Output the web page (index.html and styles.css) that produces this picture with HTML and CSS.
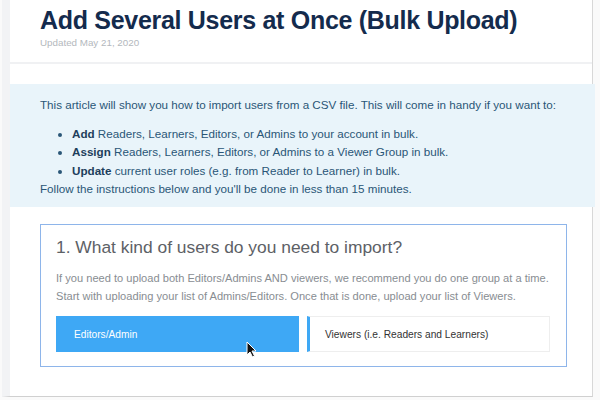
FILE: index.html
```html
<!DOCTYPE html>
<html>
<head>
<meta charset="utf-8">
<link rel="stylesheet" href="styles.css">
</head>
<body>
<div class="frame">
  <div class="page">
    <header class="head">
      <h1 class="title">Add Several Users at Once (Bulk Upload)</h1>
      <div class="updated">Updated May 21, 2020</div>
    </header>
    <section class="info">
      <p class="intro">This article will show you how to import users from a CSV file. This will come in handy if you want to:</p>
      <ul class="list">
        <li><b>Add</b> Readers, Learners, Editors, or Admins to your account in bulk.</li>
        <li><b>Assign</b> Readers, Learners, Editors, or Admins to a Viewer Group in bulk.</li>
        <li><b>Update</b> current user roles (e.g. from Reader to Learner) in bulk.</li>
      </ul>
      <p class="follow">Follow the instructions below and you'll be done in less than 15 minutes.</p>
    </section>
    <section class="step">
      <h2 class="step-title">1. What kind of users do you need to import?</h2>
      <p class="step-text">If you need to upload both Editors/Admins AND viewers, we recommend you do one group at a time. Start with uploading your list of Admins/Editors. Once that is done, upload your list of Viewers.</p>
      <div class="choices">
        <div class="choice active">Editors/Admin
          <svg class="cursor" width="12" height="17" viewBox="0 0 12 17"><path d="M1 1 L1 14 L4 11 L6.5 16 L8.5 15 L6 10 L10 10 Z" fill="#111" stroke="#fff" stroke-width="1"/></svg>
        </div>
        <div class="choice">Viewers (i.e. Readers and Learners)</div>
      </div>
    </section>
  </div>
</div>
</body>
</html>
```
FILE: styles.css
```css
* { box-sizing: border-box; }
html, body { margin: 0; padding: 0; }
body {
  width: 600px;
  height: 400px;
  overflow: hidden;
  background: #ffffff;
  font-family: "Liberation Sans", Arial, sans-serif;
}
.frame {
  width: 600px;
  height: 400px;
  padding: 0 0 0 2px;
  background: #fafafa;
}
.page {
  position: relative;
  width: 591px;
  height: 397px;
  background: #ffffff;
  border-left: 8px solid #f2f3f5;
  border-right: 1px solid #d8d8d8;
  border-bottom: 1px solid #d0d0d0;
}
.head {
  padding: 5px 0 0 30px;
  height: 64px;
  border-bottom: 2px solid #f0f1f3;
}
.title {
  margin: 0;
  font-size: 25px;
  line-height: 30px;
  font-weight: bold;
  color: #142b4d;
  letter-spacing: -0.3px;
}
.updated {
  margin-top: 2px;
  font-size: 9.8px;
  color: #b3b8bd;
}
.info {
  margin: 20px -3px 0 0;
  padding: 12px 0 8px 30px;
  background: #e9f4fa;
  color: #2a5677;
  font-size: 11.65px;
  line-height: 18.5px;
}
.intro { margin: 0 0 10px; }
.list {
  margin: 0;
  padding: 0 0 0 32px;
}
.list li { margin: 0; }
.list b { color: #1d3e5c; }
.follow { margin: 0; }
.step {
  margin: 17px 0 0 30px;
  width: 527px;
  border: 1.5px solid #8eb5ea;
  padding: 11px 15px 13.5px 15px;
}
.step-title {
  margin: 0;
  font-size: 17.4px;
  font-weight: normal;
  color: #5d6166;
  line-height: 22px;
}
.step-text {
  margin: 11px 0 11.5px;
  font-size: 11.1px;
  line-height: 18px;
  color: #888d92;
}
.choices {
  display: flex;
  gap: 8px;
}
.choice {
  position: relative;
  width: 243px;
  height: 36px;
  display: flex;
  align-items: center;
  padding-left: 15px;
  font-size: 10.2px;
  color: #333;
  border: 1px solid #eeeeee;
  border-left: 3px solid #3ea8f5;
}
.choice.active {
  background: #3ea8f5;
  color: #ffffff;
  border: none;
  padding-left: 18px;
}
.cursor {
  position: absolute;
  left: 190px;
  top: 25px;
}
```
